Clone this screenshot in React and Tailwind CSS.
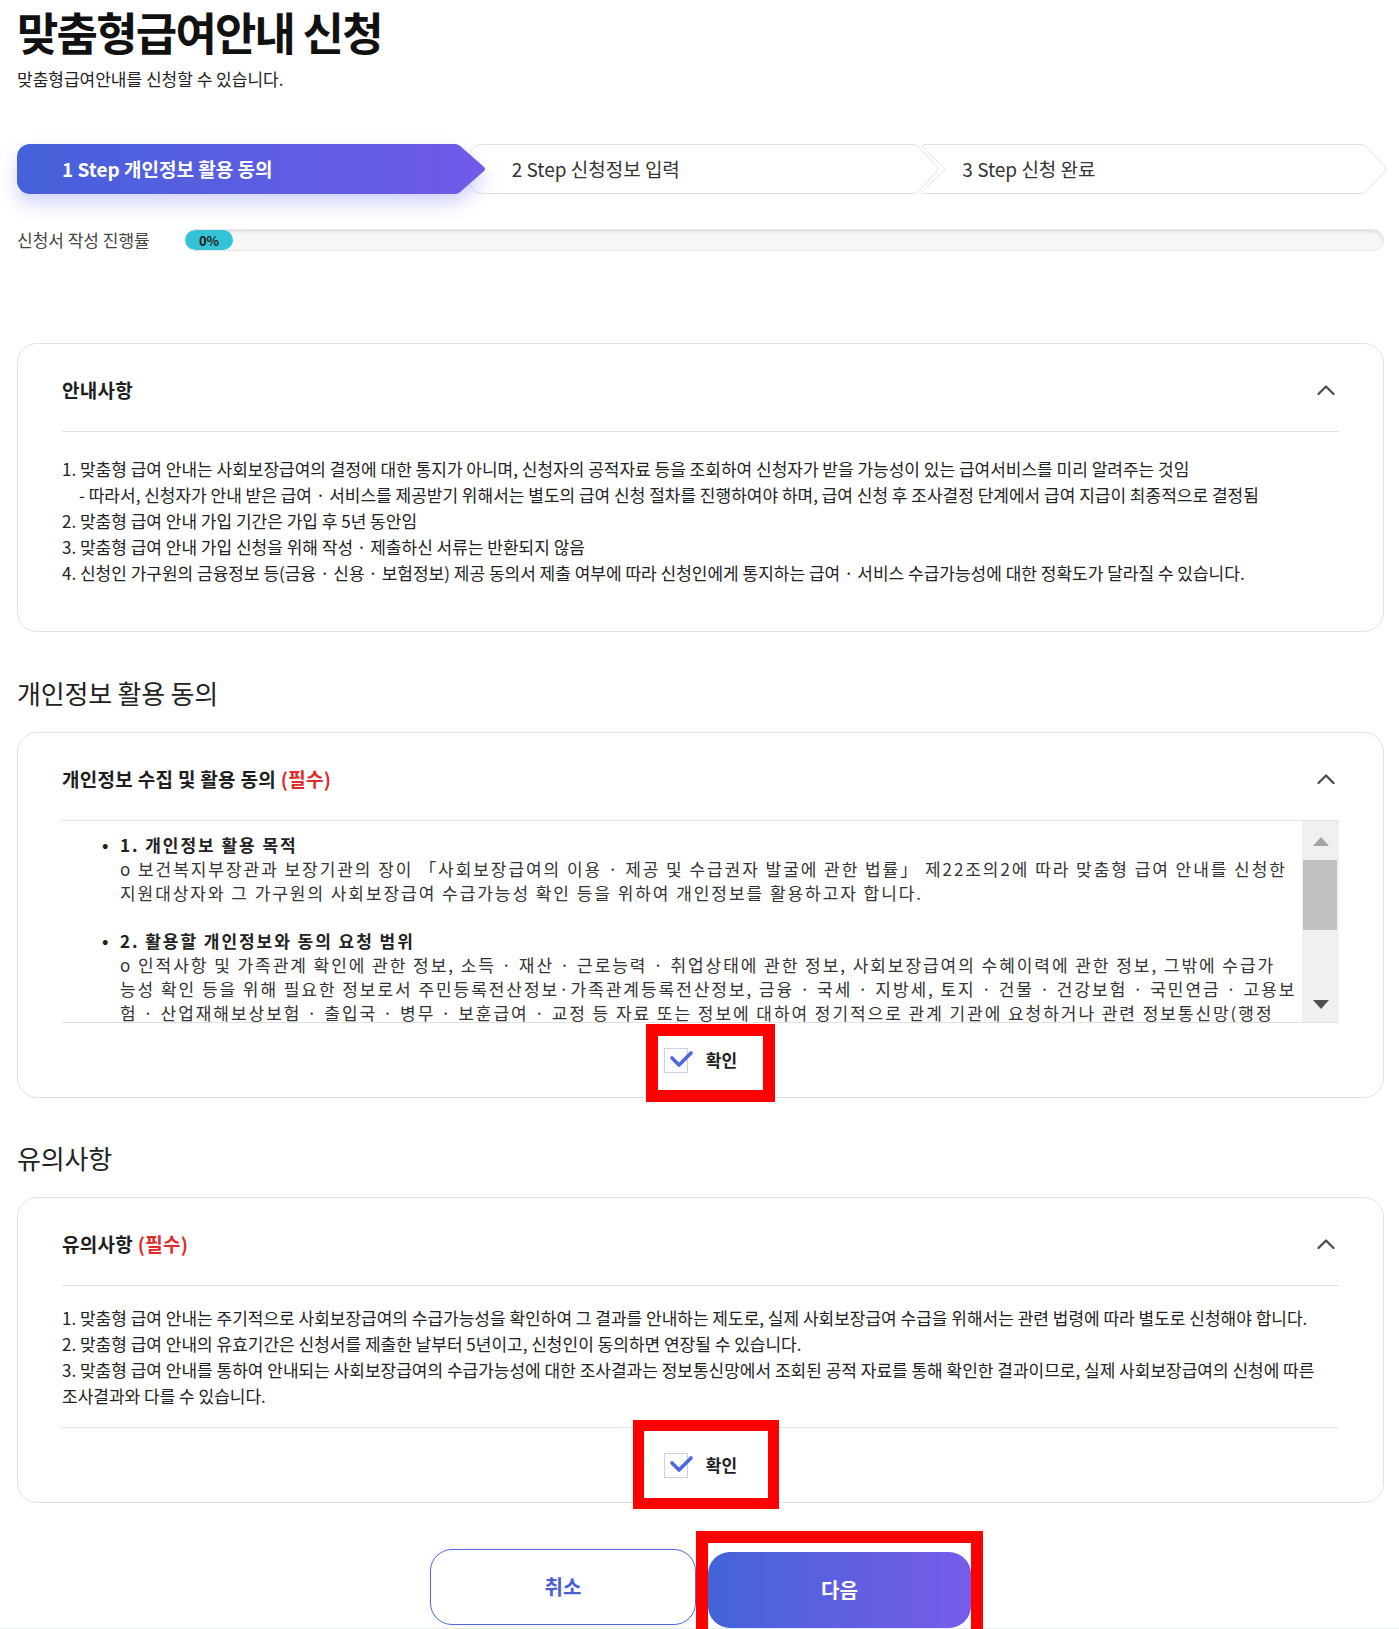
import React from 'react';

function StepShape({ index }) {
  if (index === 0) {
    return (
      <svg className="absolute left-0 top-0 h-[50px] w-full overflow-visible drop-shadow-[0_9px_9px_rgba(86,92,230,0.28)]">
        <defs>
          <linearGradient id="stepGrad" x1="0" y1="0" x2="1" y2="0">
            <stop offset="0" stopColor="#4561da" />
            <stop offset="1" stopColor="#715ae9" />
          </linearGradient>
        </defs>
        <path
          d="M13,0 H438 Q441,0 443.5,2.3 L467,23 Q469,25 467,27 L443.5,47.7 Q441,50 438,50 H13 A13,13 0 0 1 0,37 V13 A13,13 0 0 1 13,0 Z"
          fill="url(#stepGrad)"
        />
      </svg>
    );
  }
  if (index === 1) {
    return (
      <svg className="absolute left-0 top-0 h-[50px] w-full overflow-visible">
        <path
          d="M9,0.5 H440 Q443,0.5 445.3,2.6 L464,23 Q466,25 464,27 L445.3,47.4 Q443,49.5 440,49.5 H9 A12.5,12.5 0 0 1 -3.5,37 V13 A12.5,12.5 0 0 1 9,0.5 Z"
          fill="#fff"
          stroke="#e3e3e3"
        />
      </svg>
    );
  }
  return (
    <svg className="absolute left-0 top-0 h-[50px] w-full overflow-visible">
      <path
        d="M-4,0.5 H433 Q436,0.5 438.3,2.6 L457,23 Q459,25 457,27 L438.3,47.4 Q436,49.5 433,49.5 H-4 Q-8,49.5 -5.6,46.8 L15.5,27 Q17.5,25 15.5,23 L-5.6,3.2 Q-8,0.5 -4,0.5 Z"
        fill="#fff"
        stroke="#e3e3e3"
      />
    </svg>
  );
}

const STEPS = [
  { label: '1 Step 개인정보 활용 동의', pad: 'pl-[45px]', text: 'font-bold text-white', z: 'z-20' },
  { label: '2 Step 신청정보 입력', pad: 'pl-[39px]', text: 'text-[#333]', z: 'z-10' },
  { label: '3 Step 신청 완료', pad: 'pl-[34px]', text: 'text-[#333]', z: 'z-0' },
];

function ChevronUp() {
  return (
    <svg width="18" height="10" viewBox="0 0 18 10" className="mr-[4px]">
      <polyline points="1.5,9 9,1.5 16.5,9" fill="none" stroke="#4a4a4a" strokeWidth="2.2" strokeLinecap="round" strokeLinejoin="round" />
    </svg>
  );
}

function CardHeader({ title, required }) {
  return (
    <div className="flex h-[88px] items-center justify-between border-b border-[#e2e2e2] pt-[4px]">
      <h3 className="text-[19px] font-bold leading-[26px] tracking-[0.3px] text-[#1e1e1e]">
        {title}
        {required && <span className="text-[#e32a2a]"> (필수)</span>}
      </h3>
      <ChevronUp />
    </div>
  );
}

function ConfirmCheck() {
  return (
    <div className="flex h-[74px] items-center justify-center gap-[18px]">
      <span className="relative block h-[25px] w-[24px] border border-[#c9d1e4] bg-white">
        <svg width="30" height="24" className="absolute -left-px -top-px overflow-visible">
          <polyline points="8,10 15,17 27,5" fill="none" stroke="#4d67de" strokeWidth="3.6" strokeLinecap="round" strokeLinejoin="round" />
        </svg>
      </span>
      <span className="text-[17px] font-bold leading-[24px] text-[#1e1e1e]">확인</span>
    </div>
  );
}

const SCROLL_LINES = [
  { bullet: true, bold: true, text: '1. 개인정보 활용 목적' },
  { text: 'o 보건복지부장관과 보장기관의 장이 「사회보장급여의 이용 · 제공 및 수급권자 발굴에 관한 법률」 제22조의2에 따라 맞춤형 급여 안내를 신청한' },
  { text: '지원대상자와 그 가구원의 사회보장급여 수급가능성 확인 등을 위하여 개인정보를 활용하고자 합니다.' },
  { text: '\u00a0' },
  { bullet: true, bold: true, text: '2. 활용할 개인정보와 동의 요청 범위' },
  { text: 'o 인적사항 및 가족관계 확인에 관한 정보, 소득 · 재산 · 근로능력 · 취업상태에 관한 정보, 사회보장급여의 수혜이력에 관한 정보, 그밖에 수급가' },
  { text: '능성 확인 등을 위해 필요한 정보로서 주민등록전산정보·가족관계등록전산정보, 금융 · 국세 · 지방세, 토지 · 건물 · 건강보험 · 국민연금 · 고용보' },
  { text: '험 · 산업재해보상보험 · 출입국 · 병무 · 보훈급여 · 교정 등 자료 또는 정보에 대하여 정기적으로 관계 기관에 요청하거나 관련 정보통신망(행정' },
];

export default function App() {
  return (
    <div className="relative flex h-[1629px] w-full flex-col overflow-hidden bg-white font-['Noto_Sans_CJK_KR',sans-serif] text-[#222]">
      <div className="mt-[6px] h-px bg-[#e2e2e2]" />

      <div className="ml-[17px] mr-[15px]">
        <h1 className="-mt-[7px] text-[45px] font-bold leading-[66px] tracking-[-1.8px] text-[#111]">맞춤형급여안내 신청</h1>
        <p className="mt-[2px] text-[17px] leading-[24px] text-[#222]">맞춤형급여안내를 신청할 수 있습니다.</p>

        {/* steps */}
        <div className="mt-[53px] grid grid-cols-3">
          {STEPS.map((s, i) => (
            <div key={s.label} className={`relative flex h-[50px] items-center ${s.z}`}>
              <StepShape index={i} />
              <span className={`relative text-[19px] leading-[28px] ${s.pad} ${s.text}`}>{s.label}</span>
            </div>
          ))}
        </div>

        {/* progress */}
        <div className="mt-[35px] flex h-[22px] items-center">
          <span className="w-[167px] text-[17px] leading-[22px] text-[#444]">신청서 작성 진행률</span>
          <div className="flex h-[22px] flex-1 overflow-hidden rounded-full border border-[#e8e8e8] bg-[#f7f7f7] shadow-[inset_0_2px_3px_rgba(0,0,0,0.10)]">
            <div className="flex h-full w-[48px] items-center justify-center rounded-full bg-[#34c3d6] text-[13px] font-bold leading-none text-[#1a1a1a]">
              0%
            </div>
          </div>
        </div>

        {/* 안내사항 */}
        <section className="mt-[92px] rounded-[20px] border border-[#e3e3e3] px-[44px]">
          <CardHeader title="안내사항" />
          <div className="pb-[45px] pt-[24px] text-[17px] leading-[26px] text-[#222]">
            <p>1. 맞춤형 급여 안내는 사회보장급여의 결정에 대한 통지가 아니며, 신청자의 공적자료 등을 조회하여 신청자가 받을 가능성이 있는 급여서비스를 미리 알려주는 것임</p>
            <p className="pl-[17px]">- 따라서, 신청자가 안내 받은 급여 · 서비스를 제공받기 위해서는 별도의 급여 신청 절차를 진행하여야 하며, 급여 신청 후 조사결정 단계에서 급여 지급이 최종적으로 결정됨</p>
            <p>2. 맞춤형 급여 안내 가입 기간은 가입 후 5년 동안임</p>
            <p>3. 맞춤형 급여 안내 가입 신청을 위해 작성 · 제출하신 서류는 반환되지 않음</p>
            <p>4. 신청인 가구원의 금융정보 등(금융 · 신용 · 보험정보) 제공 동의서 제출 여부에 따라 신청인에게 통지하는 급여 · 서비스 수급가능성에 대한 정확도가 달라질 수 있습니다.</p>
          </div>
        </section>

        <h2 className="mb-[22px] mt-[44px] text-[26px] leading-[34px] tracking-[-0.2px] text-[#222]">개인정보 활용 동의</h2>

        {/* 개인정보 수집 및 활용 동의 */}
        <section className="relative rounded-[20px] border border-[#e3e3e3] px-[44px]">
          <CardHeader title="개인정보 수집 및 활용 동의" required />
          <div className="flex h-[202px] border-b border-[#e2e2e2]">
            <div className="flex-1 overflow-hidden pl-[40px] pt-[12px] text-[17px] leading-[24px] tracking-[1.95px] text-[#333]">
              {SCROLL_LINES.map((l, i) => (
                <div key={i} className={`flex whitespace-nowrap ${l.bold ? 'font-bold text-[#222]' : ''}`}>
                  <span className="w-[18px] shrink-0 tracking-normal">{l.bullet ? '•' : ''}</span>
                  <span>{l.text}</span>
                </div>
              ))}
            </div>
            <div className="flex w-[37px] flex-col items-center bg-[#f0f0f0] pt-[16px]">
              <svg width="16" height="9" viewBox="0 0 16 9">
                <polygon points="8,0 16,9 0,9" fill="#a3a3a3" />
              </svg>
              <div className="ml-[-2px] mt-[14px] h-[70px] w-[34px] bg-[#c1c1c1]" />
              <svg width="16" height="9" viewBox="0 0 16 9" className="mt-[70px]">
                <polygon points="0,0 16,0 8,9" fill="#505050" />
              </svg>
            </div>
          </div>
          <ConfirmCheck />
          <div className="pointer-events-none absolute left-[628px] top-[291px] h-[78px] w-[129px] border-[12px] border-[#ff0000]" />
        </section>

        <h2 className="mb-[22px] mt-[43px] text-[26px] leading-[34px] tracking-[-0.2px] text-[#222]">유의사항</h2>

        {/* 유의사항 */}
        <section className="relative rounded-[20px] border border-[#e3e3e3] px-[44px]">
          <CardHeader title="유의사항" required />
          <div className="border-b border-[#e2e2e2] pb-[18px] pt-[19px] text-[17px] leading-[26px] text-[#222]">
            <p>1. 맞춤형 급여 안내는 주기적으로 사회보장급여의 수급가능성을 확인하여 그 결과를 안내하는 제도로, 실제 사회보장급여 수급을 위해서는 관련 법령에 따라 별도로 신청해야 합니다.</p>
            <p>2. 맞춤형 급여 안내의 유효기간은 신청서를 제출한 날부터 5년이고, 신청인이 동의하면 연장될 수 있습니다.</p>
            <p>
              <span className="whitespace-nowrap">3. 맞춤형 급여 안내를 통하여 안내되는 사회보장급여의 수급가능성에 대한 조사결과는 정보통신망에서 조회된 공적 자료를 통해 확인한 결과이므로, 실제 사회보장급여의 신청에 따른</span>
              <br />
              조사결과와 다를 수 있습니다.
            </p>
          </div>
          <ConfirmCheck />
          <div className="pointer-events-none absolute left-[615px] top-[222px] h-[89px] w-[146px] border-[11px] border-[#ff0000]" />
        </section>

        {/* buttons */}
        <div className="mt-[46px] flex items-start justify-center gap-[12px]">
          <button className="h-[76px] w-[266px] rounded-[22px] border border-[#4f69de] bg-white text-[20px] font-bold text-[#4a5dd4] shadow-[0_0_8px_rgba(0,0,0,0.06)]">
            취소
          </button>
          <div className="relative mt-[3px]">
            <button className="h-[76px] w-[263px] rounded-[22px] bg-linear-to-r from-[#4263d8] to-[#765ce9] text-[20px] font-bold text-white">
              다음
            </button>
            <div className="pointer-events-none absolute -left-[12px] -right-[12px] -top-[21px] h-[120px] border-[12px] border-[#ff0000]" />
          </div>
        </div>
      </div>

      <div className="h-[40px] shrink-0 bg-[#e7eee8]" />
    </div>
  );
}
